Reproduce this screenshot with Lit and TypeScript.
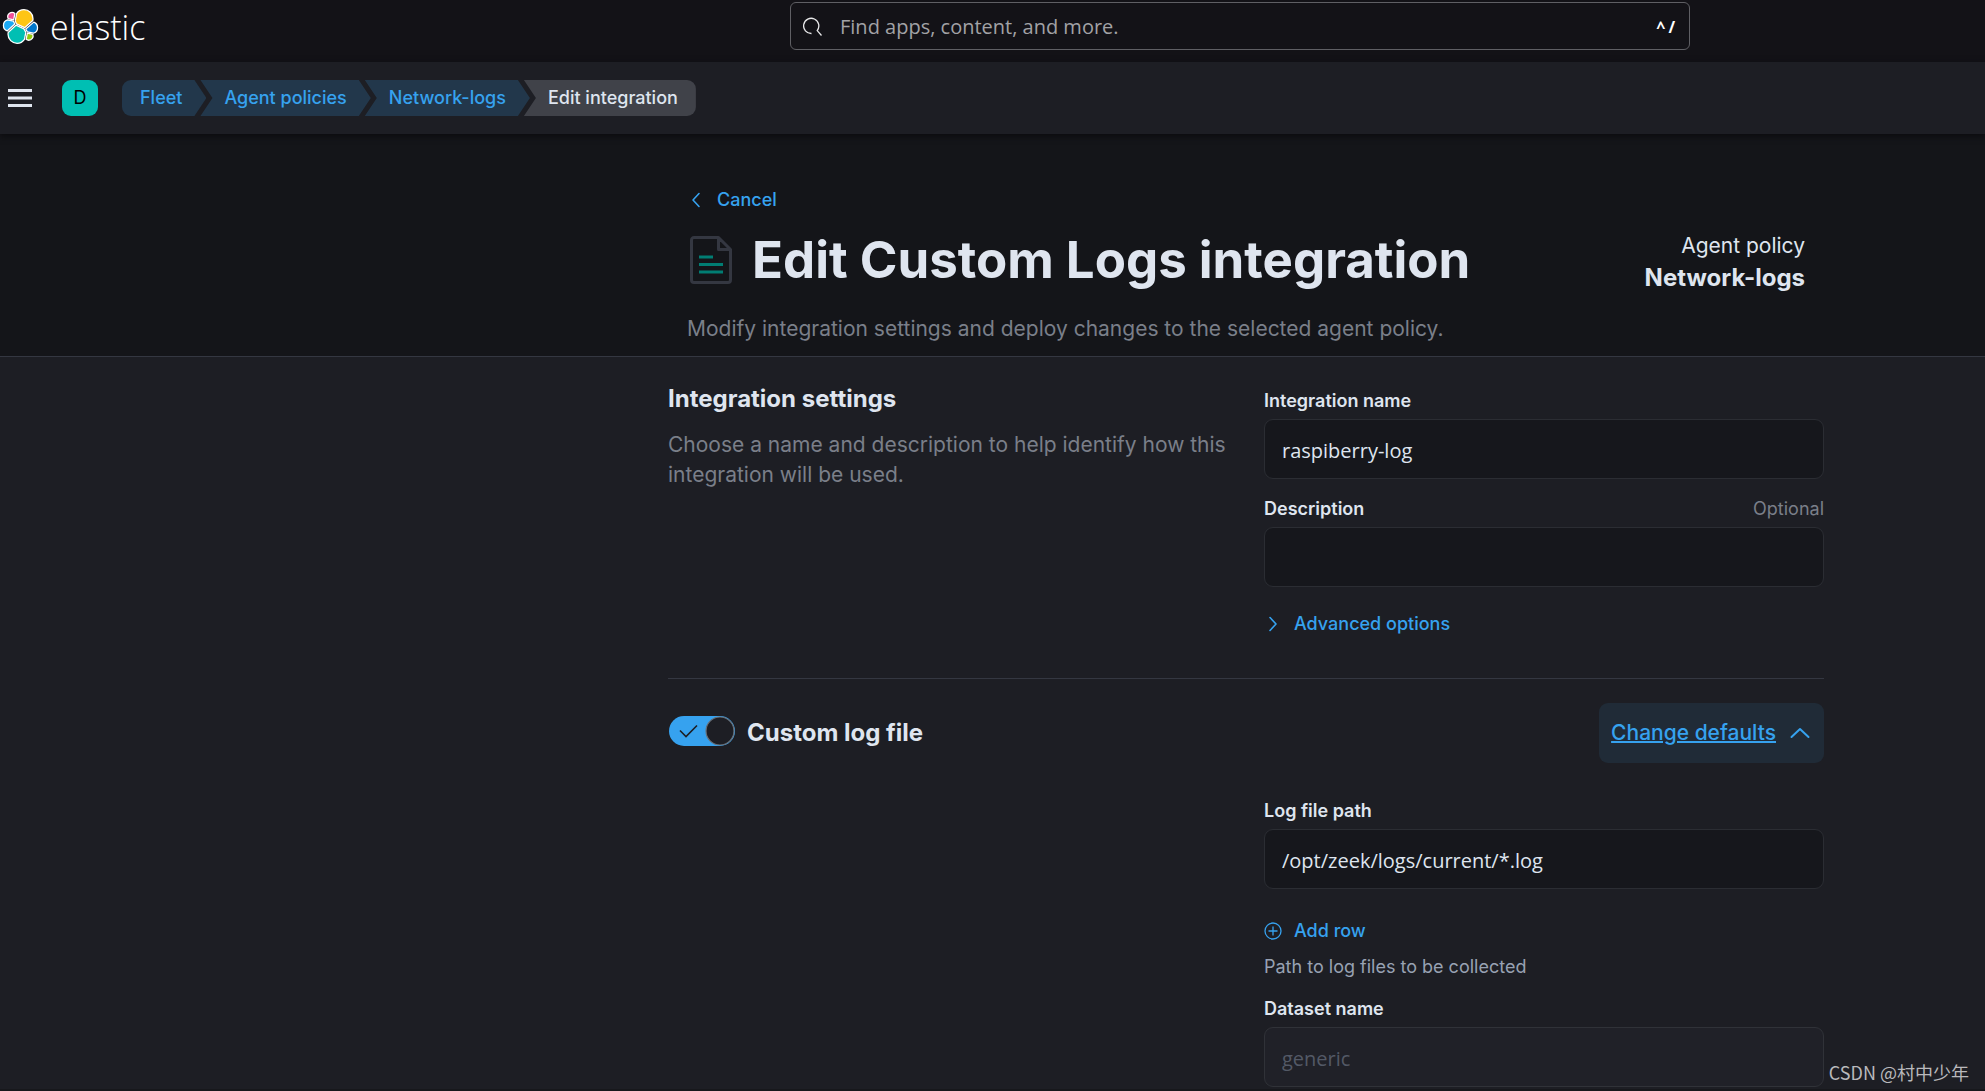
import { LitElement, html, css, svg } from "lit";
import { customElement, state } from "lit/decorators.js";

const elasticLogo = svg`
  <g stroke="#fff" stroke-width="1.1" stroke-linejoin="round">
    <path fill="#fec514" d="M12.58 13.787l7.002 3.211 7.066-6.213a7.849 7.849 0 0 0 .152-1.557c0-4.287-3.487-7.775-7.775-7.775a7.78 7.78 0 0 0-6.42 3.39L11.43 11.25z"/>
    <path fill="#00bfb3" d="M5.35 21.198a7.904 7.904 0 0 0-.147 1.532c0 4.298 3.497 7.795 7.795 7.795a7.8 7.8 0 0 0 6.436-3.395l1.166-6.085-1.556-2.976-7.03-3.211z"/>
    <path fill="#f04e98" d="M5.3 9.1l4.79 1.13 1.05-5.46a3.73 3.73 0 0 0-5.84 4.33z"/>
    <path fill="#1ba9f5" d="M4.74 10.233C2.69 10.912 1.25 12.9 1.25 15.09a5.11 5.11 0 0 0 3.248 4.744l6.56-5.93-1.204-2.574z"/>
    <path fill="#93c90e" d="M20.87 27.13a3.73 3.73 0 0 0 2.26.77 3.77 3.77 0 0 0 3.57-4.99l-4.79-1.12z"/>
    <path fill="#07c" d="M21.85 20.6l5.27 1.23a5.13 5.13 0 0 0 3.63-4.85 5.12 5.12 0 0 0-3.28-4.78l-6.9 6.05z"/>
  </g>`;

@customElement("app-root")
export class AppRoot extends LitElement {
  @state() private crumbs = ["Fleet", "Agent policies", "Network-logs"];
  @state() private enabled = true;

  static styles = css`
    :host {
      display: block;
      --ui: Inter, "Liberation Sans", sans-serif;
      --input: "Open Sans", "Noto Sans", sans-serif;
      --blue: #36a2ef;
      --text: #dfe5ef;
      --muted: #7a7f89;
      --line: #343741;
      font: 400 18px/24px var(--ui);
      color: var(--text);
    }
    *, *::before, *::after { box-sizing: border-box; }
    h1, h2, p { margin: 0; }
    a { text-decoration: none; color: inherit; }
    button { font: inherit; color: inherit; background: none; border: 0; padding: 0; cursor: pointer; }
    svg { display: block; flex: none; fill: none; }
    .page {
      position: relative;
      display: flex;
      flex-direction: column;
      min-height: 100vh;
      background: #1d1e24;
      border-bottom: 2px solid #17181c;
    }
    .top {
      display: grid;
      grid-template-columns: 790fr 900fr 295fr;
      height: 62px;
      padding-top: 2px;
      background: #131217;
    }
    .brand {
      display: flex;
      align-items: center;
      align-self: start;
      gap: 11px;
      height: 48px;
      padding-left: 2px;
      color: #fff;
    }
    .wordmark { padding-top: 2px; font: 300 34px/40px "Open Sans", "Noto Sans", sans-serif; }
    .search {
      display: flex;
      align-items: center;
      height: 48px;
      padding: 2px 14px 0 12px;
      border: 1px solid #5f5f64;
      border-radius: 6px;
    }
    .search input {
      flex: 1;
      min-width: 0;
      margin-left: 17px;
      padding: 0;
      border: 0;
      outline: 0;
      background: none;
      color: #fff;
      font: 400 20px/30px var(--input);
    }
    .search input::placeholder { color: #a2a2a6; opacity: 1; }
    kbd { display: flex; gap: 3px; font: 700 16px/24px var(--input); color: #fff; }
    .bar {
      display: flex;
      align-items: center;
      height: 72px;
      padding-left: 8px;
      background: #1d1e24;
      box-shadow: 0 2px 6px #0b0b0e;
      z-index: 1;
    }
    .avatar {
      width: 36px;
      height: 36px;
      margin: 0 24px 0 30px;
      border-radius: 9px;
      background: #00bfb3;
      color: #000;
    }
    .crumbs { display: flex; margin: 0; padding: 0; list-style: none; font-weight: 500; line-height: 36px; }
    .crumb {
      height: 36px;
      margin-left: -6px;
      padding: 0 24px;
      background: #22374b;
      color: var(--blue);
      clip-path: polygon(0 0, calc(100% - 12px) 0, 100% 50%, calc(100% - 12px) 100%, 0 100%, 12px 50%);
    }
    .crumb.first {
      margin-left: 0;
      padding-left: 18px;
      border-radius: 9px 0 0 9px;
      clip-path: polygon(0 0, calc(100% - 12px) 0, 100% 50%, calc(100% - 12px) 100%, 0 100%);
    }
    .crumb.last {
      padding-right: 18px;
      border-radius: 0 9px 9px 0;
      background: #404249;
      color: var(--text);
      clip-path: polygon(0 0, 100% 0, 100% 100%, 0 100%, 12px 50%);
    }
    .wrap { display: grid; grid-template-columns: 668fr 1156fr 161fr; }
    .inner { grid-column: 2; min-width: 0; }
    .hero { background: #141519; border-bottom: 1px solid var(--line); }
    .hero .inner { padding: 54px 19px 12px; }
    .link { display: flex; align-items: center; gap: 12px; color: var(--blue); font-weight: 500; }
    .headrow { display: flex; justify-content: space-between; margin-top: 18px; }
    .titlebox { display: flex; align-items: center; gap: 20px; height: 60px; padding-left: 3px; }
    h1 { font-size: 51px; line-height: 60px; font-weight: 700; }
    .policy { text-align: right; font-size: 21px; line-height: 32px; }
    .policy strong { display: block; font-size: 24px; font-weight: 700; }
    .lead { font-size: 21px; line-height: 30px; color: var(--muted); }
    .hero .lead { margin-top: 20px; }
    .row { display: grid; grid-template-columns: 1fr 1fr; column-gap: 36px; }
    .settings { padding: 32px 0 42px; border-bottom: 1px solid var(--line); }
    h2 { font-size: 24px; line-height: 30px; font-weight: 700; }
    .settings h2 { margin: -5px 0 16px; }
    .field + .field { margin-top: 18px; }
    .labels { display: flex; justify-content: space-between; margin-bottom: 6px; color: var(--muted); }
    label { color: var(--text); font-weight: 600; }
    .text {
      display: block;
      width: 100%;
      height: 60px;
      padding: 2px 17px 0;
      border: 1px solid #2b2d33;
      border-radius: 9px;
      outline: 0;
      background: #16171c;
      color: var(--text);
      font: 400 20px/30px var(--input);
    }
    .text.off { background: #202128; border-color: #303238; }
    .text::placeholder { color: #535966; opacity: 1; }
    .advanced { margin-top: 25px; }
    .stream { display: flex; justify-content: space-between; align-items: center; margin: 24px 0 36px; }
    .toggle { display: flex; align-items: center; gap: 12px; }
    .toggle h2 label { font-weight: 700; }
    .switch {
      appearance: none;
      display: block;
      width: 66px;
      height: 30px;
      margin: 0 0 4px 1px;
      border-radius: 15px;
      background: #535966;
      cursor: pointer;
    }
    .knobbox { display: grid; }
    .knobbox > * { grid-area: 1 / 1; }
    .knobbox svg { pointer-events: none; margin-left: 1px; }
    .switch:checked { background: var(--blue); }
    .defaults {
      display: flex;
      align-items: center;
      gap: 14px;
      height: 60px;
      padding: 0 14px 0 12px;
      border-radius: 9px;
      background: #202b37;
      color: var(--blue);
      font-size: 21px;
      font-weight: 500;
    }
    .defaults span { text-decoration: underline; text-decoration-thickness: 2px; }
    .vars { grid-column: 2; }
    .add { margin-top: 30px; }
    .help { margin-top: 12px; color: #98a2b3; }
    .mark {
      position: absolute;
      right: 16px;
      bottom: 5px;
      color: #b9b9bc;
      font: 400 18px/24px "Noto Sans CJK SC", "Noto Sans", sans-serif;
    }
  `;

  private toggle() {
    this.enabled = !this.enabled;
  }

  render() {
    return html`
      <div class="page">
        <header class="top">
          <a class="brand" href="#home">
            <svg width="37" height="37" viewBox="0 0 32 32">${elasticLogo}</svg>
            <span class="wordmark">elastic</span>
          </a>
          <div class="search">
            <svg width="20" height="20" viewBox="0 0 20 20" stroke="#e8e8ea" stroke-width="1.3">
              <path d="M8.500 16.500A7.600 7.600 0 1 1 14.200 13.600L18.500 18.500"/>
            </svg>
            <input type="search" aria-label="Find apps, content, and more." placeholder="Find apps, content, and more." />
            <kbd><span>^</span><span>/</span></kbd>
          </div>
        </header>

        <nav class="bar" aria-label="Breadcrumbs">
          <button aria-label="Toggle primary navigation">
            <svg width="24" height="18" viewBox="0 0 24 18">
              <path fill="#dfe5ef" d="M0 0h24v3H0zM0 7.500h24v3H0zM0 15h24v3H0z"/>
            </svg>
          </button>
          <button class="avatar" aria-label="Default space">D</button>
          <ol class="crumbs">
            ${this.crumbs.map(
              (c, i) => html`<li class="crumb ${i === 0 ? "first" : ""}"><a href="#${i}">${c}</a></li>`
            )}
            <li class="crumb last" aria-current="page">Edit integration</li>
          </ol>
        </nav>

        <section class="hero wrap">
          <div class="inner">
            <a class="link" href="#cancel">
              <svg width="18" height="18" viewBox="0 0 18 18" stroke="currentColor" stroke-width="1.600" stroke-linecap="round" stroke-linejoin="round">
                <path d="M12 2.500L6 9l6 6.500"/>
              </svg>
              Cancel
            </a>
            <div class="headrow">
              <div class="titlebox">
                <svg width="42" height="48" viewBox="0 0 42 48" stroke-width="3">
                  <path stroke="#343741" stroke-linejoin="round" d="M28.500 1.500H4A2.500 2.500 0 0 0 1.500 4v40A2.500 2.500 0 0 0 4 46.500h34a2.500 2.500 0 0 0 2.500-2.500V13.500zV13.500h12"/>
                  <path stroke="#017d73" d="M9 21h14M9 28.500h24M9 36h24"/>
                </svg>
                <h1>Edit Custom Logs integration</h1>
              </div>
              <p class="policy">Agent policy <strong>Network-logs</strong></p>
            </div>
            <p class="lead">Modify integration settings and deploy changes to the selected agent policy.</p>
          </div>
        </section>

        <main class="wrap">
          <div class="inner">
            <section class="row settings">
              <div>
                <h2>Integration settings</h2>
                <p class="lead">Choose a name and description to help identify how this integration will be used.</p>
              </div>
              <div>
                <div class="field">
                  <div class="labels"><label for="name">Integration name</label></div>
                  <input class="text" id="name" type="text" .value=${"raspiberry-log"} />
                </div>
                <div class="field">
                  <div class="labels"><label for="desc">Description</label><span>Optional</span></div>
                  <input class="text" id="desc" type="text" />
                </div>
                <button class="link advanced">
                  <svg width="18" height="18" viewBox="0 0 18 18" stroke="currentColor" stroke-width="1.600" stroke-linecap="round" stroke-linejoin="round">
                    <path d="M6 2.500L12 9l-6 6.500"/>
                  </svg>
                  Advanced options
                </button>
              </div>
            </section>

            <div class="stream">
              <div class="toggle">
                <span class="knobbox">
                  <input class="switch" id="logfile" type="checkbox" role="switch" .checked=${this.enabled} @change=${this.toggle} />
                  ${this.enabled
                    ? html`<svg width="66" height="30" viewBox="0 0 66 30">
                        <circle cx="51" cy="15" r="14" fill="#1d1e24" stroke="#6a7078" stroke-width="1.200"/>
                        <path d="M11 14.500l6 6L28 9.500" stroke="#1d1e24" stroke-width="1.600"/>
                      </svg>`
                    : html`<svg width="66" height="30" viewBox="0 0 66 30">
                        <circle cx="15" cy="15" r="14" fill="#1d1e24" stroke="#6a7078" stroke-width="1.200"/>
                      </svg>`}
                </span>
                <h2><label for="logfile">Custom log file</label></h2>
              </div>
              <button class="defaults" aria-expanded="true">
                <span>Change defaults</span>
                <svg width="20" height="20" viewBox="0 0 20 20" stroke="currentColor" stroke-width="2" stroke-linecap="round" stroke-linejoin="round">
                  <path d="M1.500 14L10 6l8.500 8"/>
                </svg>
              </button>
            </div>

            <section class="row">
              <div class="vars">
                <div class="field">
                  <div class="labels"><label for="path">Log file path</label></div>
                  <input class="text" id="path" type="text" .value=${"/opt/zeek/logs/current/*.log"} />
                  <button class="link add">
                    <svg width="18" height="18" viewBox="0 0 18 18" stroke="currentColor" stroke-width="1.300">
                      <circle cx="9" cy="9" r="8"/>
                      <path d="M9 4.500v9M4.500 9h9"/>
                    </svg>
                    Add row
                  </button>
                  <p class="help">Path to log files to be collected</p>
                </div>
                <div class="field">
                  <div class="labels"><label for="dataset">Dataset name</label></div>
                  <input class="text off" id="dataset" type="text" placeholder="generic" />
                </div>
              </div>
            </section>
          </div>
        </main>
        <span class="mark">CSDN @村中少年</span>
      </div>
    `;
  }
}
